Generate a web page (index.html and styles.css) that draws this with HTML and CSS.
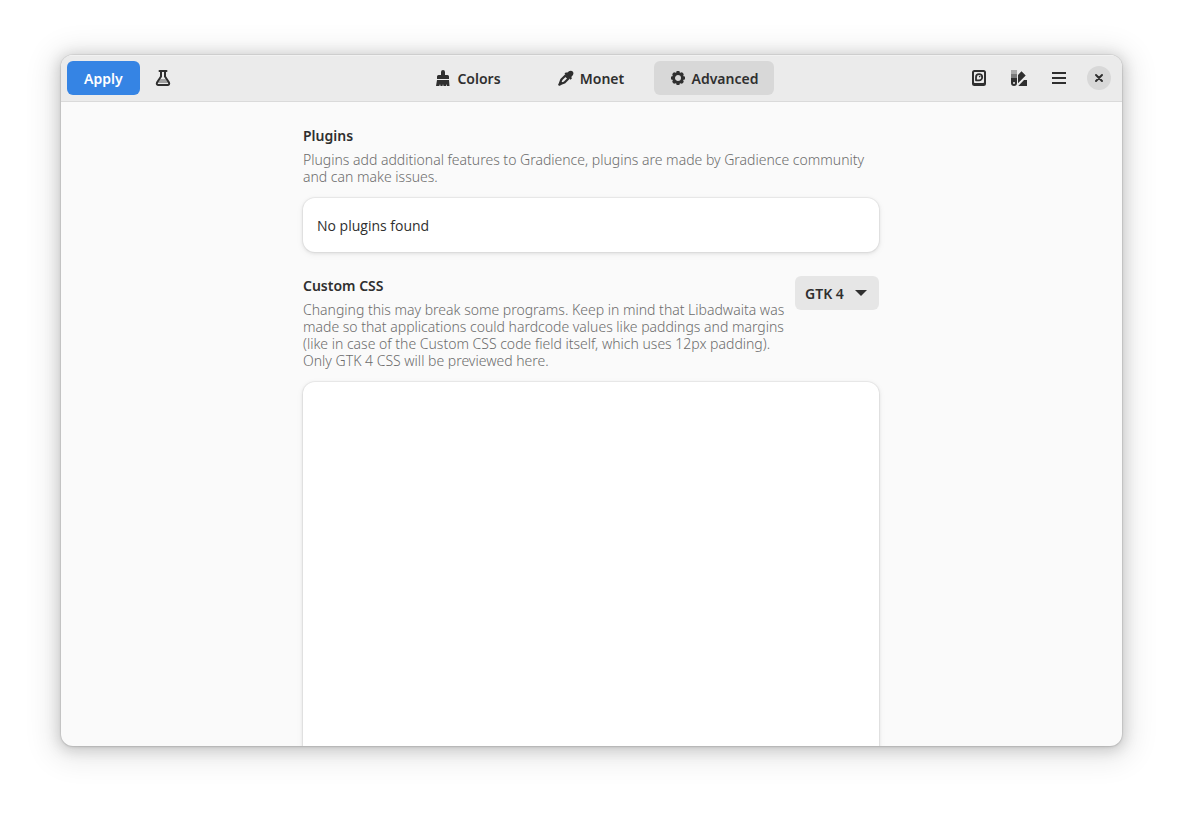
FILE: index.html
```html
<!DOCTYPE html>
<html lang="en">
<head>
<meta charset="utf-8">
<title>Gradience</title>
<meta name="viewport" content="width=device-width, initial-scale=1">
<link rel="stylesheet" href="styles.css">
</head>
<body>
<div class="window">
  <header class="headerbar">
    <div class="start">
      <button class="button suggested" type="button">Apply</button>
      <button class="button icon-button" type="button" aria-label="Presets">
        <svg class="icon" viewBox="0 0 16 16" aria-hidden="true"><path d="M4.500 1h7M6 1.500v5L2 12.600C1.400 14 2 15 3.400 15h9.200c1.400 0 2-1 1.400-2.400L10 6.500v-5" fill="none" stroke="currentColor" stroke-width="2" stroke-linejoin="round" stroke-linecap="round"/><path d="M5.500 9h5l2.500 4H3z" fill="currentColor" opacity=".4"/></svg>
      </button>
    </div>
    <nav class="switcher" aria-label="Views">
      <button class="button tab" type="button">
        <svg class="icon" viewBox="0 0 16 16" aria-hidden="true"><path d="M6 5V2a2 2 0 0 1 4 0v3h2.500A1.500 1.500 0 0 1 14 6.500V9H2V6.500A1.500 1.500 0 0 1 3.500 5zM2 10h12l.5 6H12l-.5-2-.5 2H8.500L8 14l-.5 2h-2L5 14l-.7 2H1z" fill="currentColor"/></svg>
        <span class="label">Colors</span>
      </button>
      <button class="button tab" type="button">
        <svg class="icon" viewBox="0 0 16 16" aria-hidden="true"><path d="M9 2.800l1-.8C11.500.600 13.500.300 14.700 1.400c1.200 1.200.9 3-.5 4.500l-1 1 .8 1.300-1.500 1.500L6.500 3.700 8 2.200z" fill="currentColor"/><path d="M7.500 5.500l3 3-4 4-3.500 1.200-.9-.9L3.400 9.500z" fill="none" stroke="currentColor" stroke-width="2.200" stroke-linejoin="round"/><path d="M3 13l-1.500 1.500" stroke="currentColor" stroke-width="2.500" stroke-linecap="round"/></svg>
        <span class="label">Monet</span>
      </button>
      <button class="button tab active" type="button" aria-current="page">
        <svg class="icon" viewBox="0 0 16 16" aria-hidden="true"><circle cx="8" cy="8" r="4.500" fill="none" stroke="currentColor" stroke-width="3"/><path d="M8 1v2M8 13v2M1 8h2M13 8h2M3.100 3.100l1.400 1.400M11.500 11.500l1.400 1.400M3.100 12.900l1.400-1.400M11.500 4.500l1.400-1.400" stroke="currentColor" stroke-width="3"/></svg>
        <span class="label">Advanced</span>
      </button>
    </nav>
    <div class="end">
      <button class="button icon-button" type="button" aria-label="Presets manager">
        <svg class="icon" viewBox="0 0 16 16" aria-hidden="true"><path fill-rule="evenodd" d="M3.500 0h9A2.500 2.500 0 0 1 15 2.500v11a2.500 2.500 0 0 1-2.500 2.500h-9A2.500 2.500 0 0 1 1 13.500v-11A2.500 2.500 0 0 1 3.500 0zM3 2.500V12c0 .6.400 1 1 1h8c.6 0 1-.4 1-1V2.500c0-.3-.2-.5-.5-.5h-9c-.3 0-.5.200-.5.500z" fill="currentColor"/><path d="M5 10.300V7.200a3.100 3.100 0 1 1 3.100 3.100z" fill="none" stroke="currentColor" stroke-width="1.800" stroke-linejoin="round"/><circle cx="8.700" cy="6.600" r=".8" fill="currentColor"/></svg>
      </button>
      <button class="button icon-button" type="button" aria-label="Palettes">
        <svg class="icon" viewBox="0 0 16 16" aria-hidden="true"><path d="M0 0h6v4H0z" fill="currentColor" opacity=".35"/><path d="M0 4h6v4H0z" fill="currentColor" opacity=".6"/><path fill-rule="evenodd" d="M0 8h6v5a3 3 0 0 1-6 0zM3 12a1 1 0 1 0 0 2 1 1 0 0 0 0-2zM7 5L10.500 1.200 14.700 5.400 7 13.200zM16 10v6H7.300L13 10z" fill="currentColor"/></svg>
      </button>
      <button class="button icon-button" type="button" aria-label="Main menu">
        <svg class="icon" viewBox="0 0 16 16" aria-hidden="true"><path d="M1 2h14v2H1zM1 7h14v2H1zM1 12h14v2H1z" fill="currentColor"/></svg>
      </button>
      <button class="close" type="button" aria-label="Close">
        <svg class="icon" viewBox="0 0 16 16" aria-hidden="true"><path d="M5 5l6 6M11 5l-6 6" stroke="currentColor" stroke-width="2" stroke-linecap="round"/></svg>
      </button>
    </div>
  </header>
  <main class="view">
    <div class="column">
      <section class="group">
        <div class="group-header">
          <div class="group-text">
            <h2 class="title">Plugins</h2>
            <p class="description">Plugins add additional features to Gradience, plugins are made by Gradience community and can make issues.</p>
          </div>
        </div>
        <div class="card row">No plugins found</div>
      </section>
      <section class="group">
        <div class="group-header">
          <div class="group-text">
            <h2 class="title"><label for="css">Custom CSS</label></h2>
            <p class="description">Changing this may break some programs. Keep in mind that Libadwaita was made so that applications could hardcode values like paddings and margins (like in case of the Custom CSS code field itself, which uses 12px padding). <br>Only GTK 4 CSS will be previewed here.</p>
          </div>
          <div class="dropdown">
            <select class="select" aria-label="GTK version"><option>GTK 4</option><option>GTK 3</option></select>
            <svg class="arrow" viewBox="0 0 12 6" aria-hidden="true"><path d="M0 0h12L6 6z" fill="currentColor"/></svg>
          </div>
        </div>
        <textarea class="card editor" id="css" spellcheck="false"></textarea>
      </section>
    </div>
  </main>
</div>
</body>
</html>
```

FILE: styles.css
```css
* {
  box-sizing: border-box;
}

body {
  margin: 0;
  height: 100vh;
  padding: 55px 61px 67px;
  display: flex;
  background: #fff;
  color: #2f2f2f;
  font: 14px/18px "Open Sans", "Noto Sans", sans-serif;
}

button,
select,
textarea {
  font: inherit;
  color: inherit;
  border: 0;
}

.window {
  flex: 1;
  min-width: 0;
  display: flex;
  flex-direction: column;
  overflow: hidden;
  border-radius: 12px;
  background: #fafafa;
  box-shadow: 0 0 0 1px rgba(0, 0, 0, .05), 0 1px 3px rgba(0, 0, 0, .12), 0 2px 14px 3px rgba(0, 0, 0, .15), 0 4px 28px 12px rgba(0, 0, 0, .08);
}

.headerbar {
  flex: none;
  display: grid;
  grid-template-columns: 1fr auto 1fr;
  align-items: center;
  padding: 6px;
  background: #ebebeb;
  border-bottom: 1px solid #dadada;
  box-shadow: inset 0 1px #f2f2f2;
}

.start,
.end {
  display: flex;
  align-items: center;
  gap: 6px;
}

.end {
  justify-content: flex-end;
}

.button {
  height: 34px;
  padding: 0;
  display: flex;
  align-items: center;
  justify-content: center;
  gap: 6px;
  border-radius: 6px;
  background: transparent;
  font-family: "Noto Sans", sans-serif;
  font-weight: 600;
}

.suggested {
  padding: 2px 17px 0;
  background: #3584e4;
  color: #fff;
}

.label {
  padding-top: 2px;
}

.icon-button {
  width: 34px;
}

.icon {
  width: 16px;
  height: 16px;
  flex: none;
}

.switcher {
  display: flex;
  gap: 3px;
  margin-right: 1px;
}

.tab {
  width: 120px;
}

.active {
  background: #d8d8d8;
}

.close {
  width: 24px;
  height: 24px;
  margin: 0 5px;
  padding: 4px;
  display: flex;
  border-radius: 50%;
  background: #d8d8d8;
}

.view {
  flex: 1;
  min-height: 0;
  overflow: hidden;
  padding: 24px 13px 0 12px;
}

.column {
  max-width: 576px;
  margin: 0 auto;
  display: flex;
  flex-direction: column;
  gap: 24px;
}

.group {
  display: flex;
  flex-direction: column;
  gap: 13px;
}

.group-header {
  display: flex;
  align-items: flex-start;
  gap: 2px;
}

.group-text {
  flex: 1;
}

.title {
  margin: 0 0 6px;
  font-family: "Noto Sans", sans-serif;
  font-size: 14px;
  line-height: 19px;
  font-weight: 600;
}

.description {
  margin: 0;
  font-family: "Noto Sans", sans-serif;
  font-weight: 300;
  line-height: 17px;
  color: #6c6c6c;
}

.card {
  border-radius: 12px;
  background: #fff;
  box-shadow: 0 0 0 1px rgba(0, 0, 0, .04), 0 1px 3px 1px rgba(0, 0, 0, .07), 0 2px 6px 2px rgba(0, 0, 0, .03);
}

.row {
  padding: 19px 14px 17px;
}

.dropdown {
  display: grid;
  align-items: center;
  border-radius: 6px;
  background: #e6e6e6;
}

.select {
  grid-area: 1 / 1;
  width: 84px;
  height: 34px;
  padding: 2px 10px 0;
  appearance: none;
  background: transparent;
  font-family: "Noto Sans", sans-serif;
  font-weight: 600;
}

.arrow {
  grid-area: 1 / 1;
  justify-self: end;
  width: 12px;
  height: 6px;
  margin-right: 12px;
  pointer-events: none;
}

.editor {
  display: block;
  width: 100%;
  height: 500px;
  padding: 12px;
  resize: none;
  outline: 0;
}
```
